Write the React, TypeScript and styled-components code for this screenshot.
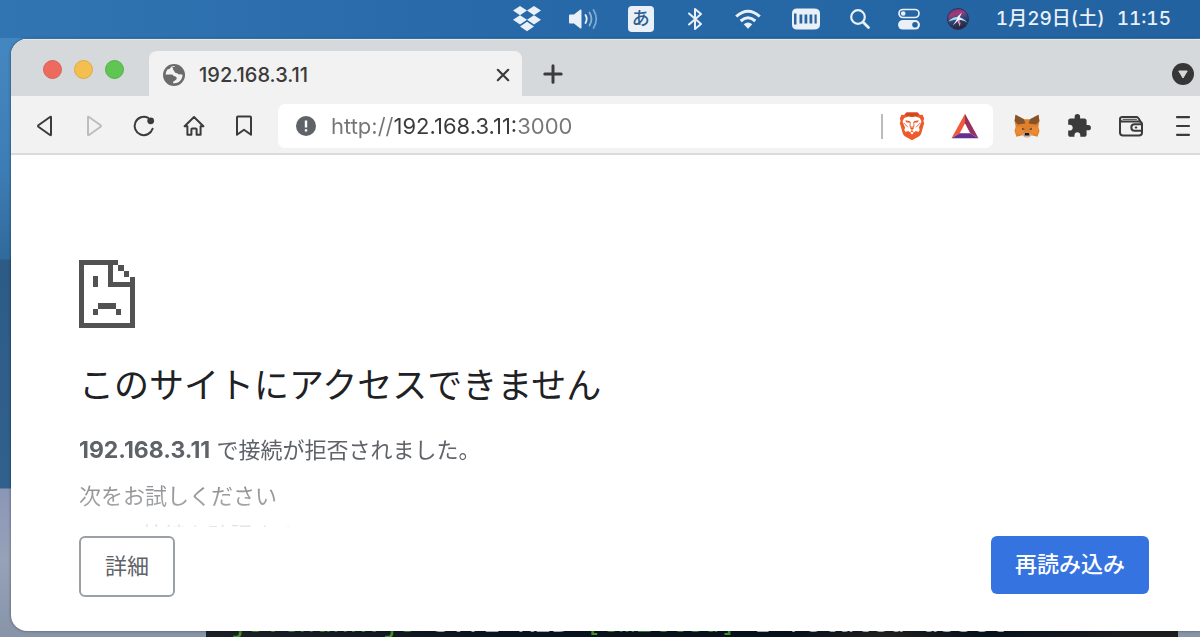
import React from "react";
import styled, { createGlobalStyle } from "styled-components";
import { MdExtension } from "react-icons/md";

const GlobalStyle = createGlobalStyle`
  *, *::before, *::after { box-sizing: border-box; }
  body {
    margin: 0;
    overflow: hidden;
    font-family: Inter, "Noto Sans CJK JP", sans-serif;
  }
  h1, p, ul { margin: 0; padding: 0; }
  svg { display: block; flex: none; }
`;

const Desktop = styled.div`
  position: relative;
  display: flex;
  flex-direction: column;
  min-height: 100vh;
  overflow: hidden;
  background: linear-gradient(
    #4488c2 0,
    #4384bd 80px,
    #3d7db5 170px,
    #316a9c 259px,
    #2c5b86 260px,
    #30618c 488px,
    #8b96b7 489px,
    #95a2b8 560px,
    #8793a7 640px
  );
`;

const MenuBar = styled.header`
  display: flex;
  align-items: center;
  justify-content: flex-end;
  gap: 26px;
  height: 38px;
  padding-right: 29px;
  color: #e9f0f8;
  background: linear-gradient(90deg, #3275b3, #286aa9 40%, #2262a0);
`;

const Clock = styled.div`
  display: flex;
  gap: 12px;
  font-size: 19px;
  font-variant-numeric: tabular-nums;
  font-weight: 500;
  line-height: 36px;
  white-space: nowrap;
`;

const InputMode = styled.span`
  display: flex;
  align-items: center;
  justify-content: center;
  width: 26px;
  height: 26px;
  margin: 0 4px;
  border-radius: 4px;
  background: #e9f0f8;
  color: #2a5e92;
  font-size: 18px;
  font-weight: 500;
  line-height: 26px;
`;

const Terminal = styled.pre`
  position: absolute;
  left: 206px;
  right: 22px;
  bottom: 0;
  height: 40px;
  margin: 0;
  padding: 10px 8px 0;
  overflow: hidden;
  background: linear-gradient(90deg, #1d2127, #0a1420 30%, #07111c 60%, #20201f 70%, #07111c 80%, #1c1d1f 95%);
  color: #c5c8ca;
  font-family: "DejaVu Sans Mono", monospace;
  font-size: 28px;
  line-height: 32px;
`;

const Green = styled.span`
  color: #44912c;
`;

const BrowserWindow = styled.main`
  position: relative;
  display: flex;
  flex: 1;
  flex-direction: column;
  margin: 1px 0 6px 11px;
  overflow: hidden;
  border-radius: 16px 0 0 16px;
  background: #fff;
  box-shadow: 0 0 3px rgba(0, 0, 0, 0.45);
`;

const TabStrip = styled.div`
  display: flex;
  align-items: flex-end;
  height: 57px;
  padding-right: 3px;
  background: #d5d9dc;
  box-shadow: inset 0 1px 0 #e4e8eb;
`;

const TrafficLights = styled.div`
  display: flex;
  gap: 12px;
  align-self: flex-start;
  padding: 21px 25px 0 32px;
`;

const Light = styled.button<{ $fill: string; $edge: string }>`
  width: 19px;
  height: 19px;
  padding: 0;
  border: 1px solid ${(p) => p.$edge};
  border-radius: 50%;
  background: ${(p) => p.$fill};
`;

const Tab = styled.div`
  display: flex;
  align-items: center;
  width: 373px;
  height: 45px;
  padding: 2px 5px 0 14px;
  border-radius: 8px 8px 0 0;
  background: #f2f2f2;
`;

const TabTitle = styled.span`
  flex: 1;
  padding-left: 14px;
  color: #3b3b3b;
  font-size: 20px;
  font-weight: 500;
  line-height: 28px;
`;

const IconButton = styled.button<{ $width: number }>`
  display: flex;
  align-items: center;
  justify-content: center;
  flex: none;
  width: ${(p) => p.$width}px;
  height: 44px;
  padding: 0;
  border: 0;
  background: none;
  color: #3b3b3b;
`;

const NewTab = styled(IconButton)`
  margin: 0 auto 0 9px;
`;

const Toolbar = styled.div`
  display: flex;
  align-items: center;
  height: 59px;
  padding: 3px 3px 0 8px;
  border-bottom: 2px solid #dadbdd;
  background: #f2f2f2;
`;

const AddressBar = styled.div`
  display: flex;
  flex: 1;
  align-items: center;
  min-width: 0;
  height: 44px;
  margin: 0 20px 0 9px;
  padding: 0 2px 0 18px;
  border-radius: 7px;
  background: #fff;
`;

const AddressInput = styled.input`
  flex: 1;
  min-width: 0;
  height: 32px;
  padding: 0;
  margin-left: 15px;
  border: 0;
  outline: 0;
  background: linear-gradient(90deg, #757575 63px, #3b3b3b 63px 187px, #757575 187px);
  background-clip: text;
  -webkit-background-clip: text;
  color: transparent;
  font-family: inherit;
  font-size: 22px;
  line-height: 32px;
`;

const Divider = styled.span`
  width: 2px;
  height: 25px;
  margin-right: 2px;
  background: #bcbcbc;
`;

const Extensions = styled.div`
  display: flex;
  gap: 24px;
`;

const ErrorPage = styled.section`
  flex: 1;
  padding: 105px 51px 34px 68px;
`;

const Heading = styled.h1`
  margin-top: 31px;
  color: #202124;
  font-size: 35px;
  font-weight: 400;
  line-height: 52px;
`;

const Summary = styled.div`
  max-height: 93px;
  margin-top: 23px;
  overflow: hidden;
  color: #5f6368;
  font-size: 22px;
  line-height: 32px;
  mask-image: linear-gradient(#000 36%, rgba(0, 0, 0, 0.7) 56%, rgba(0, 0, 0, 0.55) 82%, rgba(0, 0, 0, 0.15));
`;

const Host = styled.strong`
  font-size: 23px;
`;

const Hint = styled.p`
  margin-top: 14px;
`;

const Suggestions = styled.ul`
  margin-top: 7px;
  padding-left: 63px;
`;

const Actions = styled.div`
  display: flex;
  align-items: flex-start;
  justify-content: space-between;
  margin-top: 9px;
`;

const ActionButton = styled.button<{ $primary?: boolean }>`
  height: ${(p) => (p.$primary ? 58 : 61)}px;
  padding: 0 24px 2px;
  border: ${(p) => (p.$primary ? "0" : "2px solid #9aa0a6")};
  border-radius: 6px;
  background: ${(p) => (p.$primary ? "#3573e1" : "#fff")};
  color: ${(p) => (p.$primary ? "#fff" : "#5f6368")};
  font-family: inherit;
  font-size: 22px;
  font-weight: ${(p) => (p.$primary ? 500 : 400)};
  line-height: 32px;
`;

const stroke = {
  fill: "none",
  stroke: "currentColor",
  strokeLinecap: "round",
  strokeLinejoin: "round",
} as const;

const Dropbox = () => (
  <svg width="30" height="26" viewBox="0 0 30 26" fill="currentColor">
    <path d="M8 0l7 4.600-7 4.600L1 4.600zM22 0l7 4.600-7 4.600-7-4.600zM8 9.200l7 4.600-7 4.600-7-4.600zM22 9.200l7 4.600-7 4.600-7-4.600zM15 15.800l7 4.700-7 4.700-7-4.700z" />
  </svg>
);

const Volume = () => (
  <svg width="30" height="24" viewBox="0 0 30 24">
    <path d="M1 8.500q0-1 1-1h4l6-4.800q1.500-.8 1.500.8v17q0 1.600-1.500.8L6 16.500H2q-1 0-1-1z" fill="currentColor" />
    <g {...stroke} strokeWidth="1.800">
      <path d="M17.500 8q2.400 4 0 8" />
      <path d="M21.500 5.500q4 6.500 0 13" opacity=".55" />
      <path d="M25.500 3q5.600 9 0 18" opacity=".45" />
    </g>
  </svg>
);

const Bluetooth = () => (
  <svg width="22" height="24" viewBox="0 0 22 24">
    <path {...stroke} strokeWidth="2" d="M5 6.500l12 10.500-6 5V2l6 5L5 17.500" />
  </svg>
);

const Wifi = () => (
  <svg width="32" height="22" viewBox="0 0 32 22">
    <g {...stroke} strokeLinecap="butt" strokeWidth="3">
      <path d="M4.200 8.500q11.800-10.500 23.600 0" />
      <path d="M8.700 13q7.300-6.400 14.600 0" />
    </g>
    <path d="M11.700 16.300q4.300-3.800 8.600 0L16 20.800z" fill="currentColor" />
  </svg>
);

const MemoryGauge = () => (
  <svg width="32" height="24" viewBox="0 0 32 24">
    <path d="M7 1.500h17q6 0 6 5v11q0 5-6 5H7q-5 0-5-5v-11q0-5 5-5z" fill="currentColor" />
    <path d="M4 6.500h2.500v11H4zM9.500 7.500h2.800v9H9.500zM14.500 7.500h2.800v9h-2.800zM19.500 7.500h2.800v9h-2.800zM24.500 7.500h2.200v9h-2.200z" fill="#2a65a0" />
  </svg>
);

const Search = () => (
  <svg width="24" height="24" viewBox="0 0 24 24">
    <circle cx="10" cy="10" r="6.800" {...stroke} strokeWidth="2.200" />
    <path d="M15.200 15.200l5.300 5.300" {...stroke} strokeWidth="2.800" />
  </svg>
);

const ControlCenter = () => (
  <svg width="22" height="22" viewBox="0 0 22 22">
    <rect x="1" y="1.500" width="20" height="8" rx="4" {...stroke} strokeWidth="1.700" />
    <circle cx="5.200" cy="5.500" r="2.300" fill="currentColor" />
    <rect y="12" width="22" height="9.600" rx="4.800" fill="currentColor" />
    <circle cx="17" cy="16.800" r="2.800" fill="#25639f" />
  </svg>
);

const Siri = () => (
  <svg width="24" height="24" viewBox="0 0 24 24">
    <defs>
      <linearGradient id="siri" x1="0" y1="0" x2="0.300" y2="1">
        <stop offset="0" stopColor="#5c3a72" />
        <stop offset=".35" stopColor="#a33a7c" />
        <stop offset=".6" stopColor="#33457e" />
        <stop offset="1" stopColor="#27263c" />
      </linearGradient>
    </defs>
    <circle cx="12" cy="12" r="10.500" fill="url(#siri)" stroke="#303152" />
    <path d="M2.500 14.500q4-5 9-4.500 6 .5 10 6-6-4-9.500-3.600-4 0-9.500 2.100z" fill="#8be3e4" />
    <path d="M11.500 9.500l4.500-4-2.400 5 4.400 3-4.600-.7.600 7.200-2.200-6-5 4.500 4-6z" fill="#f4eefa" />
    <path d="M13 13l3 6-4-5z" fill="#dd4b90" />
  </svg>
);

const Globe = () => (
  <svg width="22" height="22" viewBox="0 0 22 22">
    <circle cx="11" cy="11" r="11" fill="#6b6b6b" />
    <path d="M8.600 2.400L12 2q-.2 1.800-1.800 2.600-.2 1.600 1.200 2.200 0 2 1.600 2.200 2 .2 2.800 1.400 2-.6 3.800.4-.2 5-4.200 7.400-3 1.600-5.600.8.200-2 2.200-2.600 1.800-.6 1.800-2.600-1-1.800-3.200-1.800-.6-1.600-2.800-1.400l-5.200.2Q2.400 8 4.400 5.400 7 5.200 8.600 2.400z" fill="#f2f2f2" />
    <path d="M2.600 10.800l5.200.1q.2 1.700 1.700 2.100l.2 5.800q-6-1.200-7.100-8zM9 3.200l6-1q4.400 2.400 4.600 7-1.800 1-3.800.6-.4-1.700-2.800-1.400-1.500 0-1.500-1.600-1.700-.8-1.300-2.400z" fill="#6b6b6b" />
  </svg>
);

const Close = () => (
  <svg width="14" height="14" viewBox="0 0 14 14">
    <path d="M1.800 1.800l10.400 10.400M12.200 1.800L1.800 12.200" {...stroke} strokeWidth="2.200" />
  </svg>
);

const Plus = () => (
  <svg width="20" height="20" viewBox="0 0 20 20">
    <path d="M10 1.800v16.400M1.800 10h16.400" {...stroke} strokeWidth="3" />
  </svg>
);

const TabSearch = () => (
  <svg width="22" height="22" viewBox="0 0 22 22">
    <circle cx="11" cy="11" r="11" fill="#363636" />
    <path d="M6.800 8h8.400L11 15z" fill="#d5d9dc" stroke="#d5d9dc" strokeLinejoin="round" />
  </svg>
);

const Triangle = ({ forward = false }: { forward?: boolean }) => (
  <svg width="20" height="24" viewBox="0 0 20 24">
    <path
      {...stroke}
      strokeWidth="2"
      stroke={forward ? "#bdbdbd" : "#3b3b3b"}
      d={forward ? "M4 3.400v17.200q0 1 1 .4l11.600-8.300q.7-.7 0-1.400L5 3q-1-.6-1 .4z" : "M17 3.400v17.200q0 1-1 .4L4.400 12.700q-.7-.7 0-1.400L16 3q1-.6 1 .4z"}
    />
  </svg>
);

const Reload = () => (
  <svg width="24" height="24" viewBox="0 0 24 24">
    <path d="M16.200 3.800A9.200 9.200 0 1 0 20.600 14.800" {...stroke} strokeWidth="2" />
    <circle cx="18.700" cy="6.800" r="3.400" fill="currentColor" />
  </svg>
);

const Home = () => (
  <svg width="24" height="24" viewBox="0 0 24 24">
    <path d="M2.600 12.200L12 3l9.400 9.200h-2.800v8.600h-4v-5.600q0-.8-.8-.8h-3.600q-.8 0-.8.800v5.600h-4v-8.600z" {...stroke} strokeWidth="2" />
  </svg>
);

const Bookmark = () => (
  <svg width="20" height="24" viewBox="0 0 20 24">
    <path d="M3 3.500q0-.9.900-.9h12.200q.9 0 .9.900v17.300L10 15.700l-7 5.100z" {...stroke} strokeWidth="2" />
  </svg>
);

const Info = () => (
  <svg width="20" height="20" viewBox="0 0 20 20">
    <circle cx="10" cy="10" r="10" fill="#5f6368" />
    <path d="M8.800 4.600h2.400v6.800H8.800zM8.800 13.200h2.400v2.400H8.800z" fill="#fff" />
  </svg>
);

const BraveLion = () => (
  <svg width="26" height="30" viewBox="0 0 26 30">
    <path d="M7.500 1.500h11l2.500 2.600 2.600-.3 1.600 3.600-.8 2.500.8 2-3 10.600q-.5 1.700-2 2.800L13 29.200l-7.200-3.900q-1.500-1.100-2-2.800L.8 11.900l.8-2-.8-2.500 1.600-3.600 2.600.3z" fill="#ee5b2b" />
    <path d="M7.500 1.500h11l1.700 1.900-2.700 2H8.500l-2.700-2z" fill="#d1481d" />
    <path d="M13 6.200l3.500-.7 4.200 1.400 1.800 3.300-2.600 6.500.8 2-1.200 2.200-2.800-.8-3.700 3.400-3.700-3.400-2.800.8-1.200-2.200.8-2L3.500 10.200l1.800-3.300 4.200-1.400z" fill="#fff" />
    <path d="M6.200 9.300l5.200 1-.7 1.500-3.200-.3zM19.800 9.300l-5.200 1 .7 1.500 3.200-.3zM10.700 16l2.300.8 2.300-.8-.7 1.700-1.600 1-1.600-1z" fill="#ee5b2b" />
    <path d="M11.400 11.500l-.5 3.700 2.100 1 2.100-1-.5-3.700M13 18.300v2l-2.700 1.500M13 20.300l2.700 1.500M5.400 12.500l3.200 3.500M20.600 12.500L17.400 16" {...stroke} stroke="#ee5b2b" strokeWidth=".9" />
  </svg>
);

const RewardsTriangle = () => (
  <svg width="28" height="26" viewBox="0 0 28 26">
    <path d="M14 .8L.5 25.200l8.300-5L14 10.300z" fill="#f0593a" />
    <path d="M14 .8l13.500 24.400-8.300-5L14 10.300z" fill="#98305f" />
    <path d="M.5 25.200h27l-8.300-5H8.800z" fill="#642f8f" />
  </svg>
);

const Fox = () => (
  <svg width="26" height="24" viewBox="0 0 26 24">
    <path d="M1.500.8l8.500 4.400h6L24.500.8l1 6-1.200 6.200 1.200 4-2 5.800-5.800-1.500-2.700 2h-4l-2.700-2-5.800 1.500-2-5.800 1.200-4L.5 6.800z" fill="#df812c" />
    <path d="M1.500.8l8.500 4.400 1.300 4.200-7.500 1L.7 7zM24.500.8L16 5.200l-1.300 4.200 7.500 1L25.300 7z" fill="#85522e" />
    <path d="M1.700 13h6.500l1.800 4-1.500 3.800-6.300-1.300zM24.300 13h-6.500L16 17l1.500 3.800 6.300-1.300z" fill="#ed8932" />
    <path d="M8 13.700l3 1.500-2.600.8zM18 13.700l-3 1.500 2.600.8z" fill="#334052" />
    <path d="M8.300 20.500l2.700-1.700h4l2.700 1.700-2.700 2.700h-4z" fill="#c9bbae" />
    <path d="M10.900 19h4.200l.4 2.600h-5z" fill="#1c1a1a" />
  </svg>
);

const Wallet = () => (
  <svg width="26" height="22" viewBox="0 0 26 22">
    <g {...stroke} strokeWidth="2">
      <path d="M2 4v13.500q0 3 3 3h16q3 0 3-3V9.500q0-3-3-3H4.500Q2 6.500 2 4q0-2 2.500-2h14q1.700 0 4 4.800" />
      <path d="M24 9.300h-7.300q-3.400 0-3.400 3.200t3.400 3.200H24" />
      <path d="M17.700 12.500h.6" />
      <path d="M5 4.300h13.500" strokeWidth="1" />
    </g>
  </svg>
);

const Menu = () => (
  <svg width="16" height="22" viewBox="0 0 16 22">
    <path d="M2 2.200h12M2 11h12M2 19.800h12" {...stroke} strokeWidth="2.200" />
  </svg>
);

const SadPage = () => (
  <svg width="56" height="68" viewBox="0 0 168 204" fill="#525252" shapeRendering="crispEdges">
    <path d="M0 0h118v16h16v17h16v17h18v154H0zM16 16v172h136V82H86V16zM102 16v50h50V50h-18V33h-16V16z" fillRule="evenodd" />
    <path d="M42 48h16v34H42zM58 130h52v18H58zM42 148h16v16H42zM110 148h16v16h-16z" />
  </svg>
);

export default function App() {
  return (
    <>
      <GlobalStyle />
      <Desktop>
        <MenuBar>
          <Dropbox />
          <Volume />
          <InputMode>あ</InputMode>
          <Bluetooth />
          <Wifi />
          <MemoryGauge />
          <Search />
          <ControlCenter />
          <Siri />
          <Clock>
            <span>1月29日(土)</span>
            <time>11:15</time>
          </Clock>
        </MenuBar>
        <Terminal>
          <Green>_js.chunk.js</Green> 3.72 KiB <Green>[emitted]</Green> 1 related asset
        </Terminal>
        <BrowserWindow>
          <TabStrip>
            <TrafficLights>
              <Light $fill="#ed6a5e" $edge="#dc5f54" aria-label="閉じる" />
              <Light $fill="#f5bf4f" $edge="#deaa43" aria-label="しまう" />
              <Light $fill="#61c554" $edge="#54b147" aria-label="拡大" />
            </TrafficLights>
            <Tab>
              <Globe />
              <TabTitle>192.168.3.11</TabTitle>
              <IconButton $width={28} aria-label="タブを閉じる"><Close /></IconButton>
            </Tab>
            <NewTab $width={44} aria-label="新しいタブ"><Plus /></NewTab>
            <IconButton $width={28} aria-label="タブを検索"><TabSearch /></IconButton>
          </TabStrip>
          <Toolbar>
            <IconButton $width={50} aria-label="戻る"><Triangle /></IconButton>
            <IconButton $width={50} aria-label="進む" disabled><Triangle forward /></IconButton>
            <IconButton $width={50} aria-label="再読み込み"><Reload /></IconButton>
            <IconButton $width={50} aria-label="ホーム"><Home /></IconButton>
            <IconButton $width={50} aria-label="ブックマーク"><Bookmark /></IconButton>
            <AddressBar>
              <Info />
              <AddressInput type="text" aria-label="アドレス" defaultValue="http://192.168.3.11:3000" spellCheck={false} />
              <Divider />
              <IconButton $width={53} aria-label="Brave Shields"><BraveLion /></IconButton>
              <IconButton $width={53} aria-label="Brave Rewards"><RewardsTriangle /></IconButton>
            </AddressBar>
            <Extensions>
              <IconButton $width={28} aria-label="MetaMask"><Fox /></IconButton>
              <IconButton $width={28} aria-label="拡張機能"><MdExtension size={26} /></IconButton>
              <IconButton $width={28} aria-label="ウォレット"><Wallet /></IconButton>
              <IconButton $width={28} aria-label="メニュー"><Menu /></IconButton>
            </Extensions>
          </Toolbar>
          <ErrorPage>
            <SadPage />
            <Heading>このサイトにアクセスできません</Heading>
            <Summary>
              <p><Host>192.168.3.11</Host> で接続が拒否されました。</p>
              <Hint>次をお試しください</Hint>
              <Suggestions><li>接続を確認する</li></Suggestions>
            </Summary>
            <Actions>
              <ActionButton type="button">詳細</ActionButton>
              <ActionButton type="button" $primary>再読み込み</ActionButton>
            </Actions>
          </ErrorPage>
        </BrowserWindow>
      </Desktop>
    </>
  );
}
